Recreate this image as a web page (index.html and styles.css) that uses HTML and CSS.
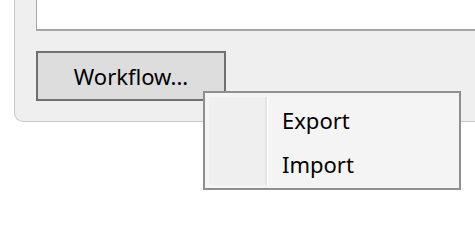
FILE: index.html
```
<!DOCTYPE html>
<html>
<head>
<meta charset="utf-8">
<link rel="stylesheet" href="styles.css">
</head>
<body>
<div class="panel">
  <div class="listbox"></div>
  <button class="btn">Workflow...</button>
</div>
<div class="menu">
  <div class="gutter"></div>
  <div class="sep"></div>
  <ul class="items">
    <li class="item">Export</li>
    <li class="item">Import</li>
  </ul>
</div>
</body>
</html>
```
FILE: styles.css
```
html, body {
  margin: 0;
  padding: 0;
  background: #ffffff;
  font-family: "Noto Sans", "Open Sans", sans-serif;
  color: #000;
}
body {
  width: 475px;
  height: 200px;
  overflow: hidden;
  position: relative;
}
.panel {
  box-sizing: border-box;
  margin-left: 14px;
  width: 461px;
  height: 122px;
  background: #efefef;
  border-left: 1px solid #c8c8c8;
  border-bottom: 1px solid #c8c8c8;
  border-bottom-left-radius: 9px;
  padding-left: 21px;
  display: flex;
  flex-direction: column;
  align-items: flex-start;
}
.listbox {
  box-sizing: border-box;
  width: 100%;
  height: 31px;
  background: #ffffff;
  border-left: 1px solid #a6a6a6;
  border-bottom: 2px solid #a6a6a6;
}
.btn {
  box-sizing: border-box;
  margin-top: 20px;
  width: 190px;
  height: 50px;
  border: 2px solid #707070;
  background: #dddddd;
  font-family: inherit;
  font-size: 22px;
  color: #000;
  padding: 0 0 1px 0;
}
.menu {
  position: absolute;
  left: 203px;
  top: 91px;
  box-sizing: border-box;
  width: 258px;
  height: 99px;
  border: 2px solid #8f8f8f;
  background: #f4f4f4;
  padding: 4px 3px 3px 4px;
  display: flex;
}
.gutter {
  width: 56px;
  background: #efefef;
  border-radius: 3px;
}
.sep {
  width: 2px;
  background: #e2e2e2;
  border-right: 1px solid #ffffff;
}
.items {
  list-style: none;
  margin: 0;
  padding: 0 0 0 14px;
  display: flex;
  flex-direction: column;
}
.item {
  height: 44px;
  line-height: 44px;
  font-size: 22px;
}
.item:first-child {
  margin-top: 1px;
}
```
